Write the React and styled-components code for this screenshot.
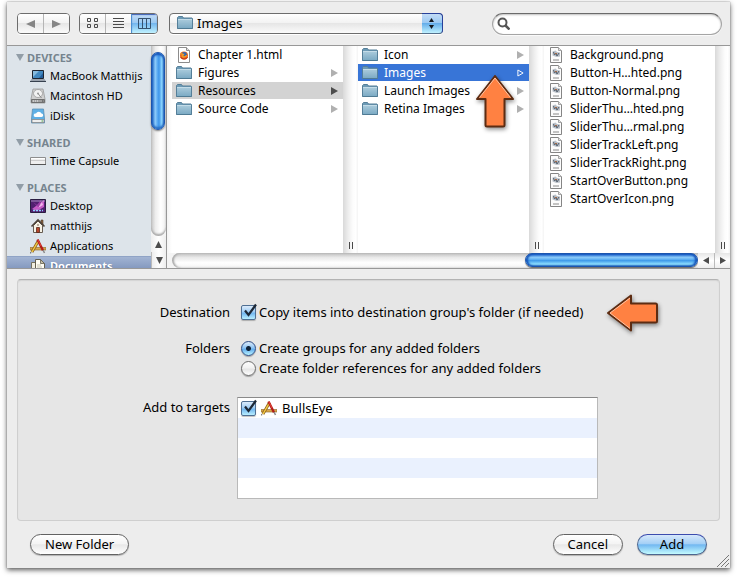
import React from "react";
import styled, { createGlobalStyle, css } from "styled-components";

const GlobalStyle = createGlobalStyle`
  * { box-sizing: border-box; }
  body {
    margin: 0;
    background: #fff;
    color: #000;
    font-family: "Lucida Grande", "Noto Sans", "Open Sans", sans-serif;
    font-size: 13px;
  }
  button, input, select { font: inherit; color: inherit; margin: 0; }
  ul { list-style: none; margin: 0; padding: 0; }
`;

const Page = styled.main`
  padding: 2px 7px 11px;
`;

const Dialog = styled.form`
  position: relative;
  background: #ededed;
  box-shadow: 0 0 1px #777, 0 2px 5px rgba(0, 0, 0, 0.65);
`;

/* Toolbar */

const Toolbar = styled.header`
  display: flex;
  align-items: center;
  height: 44px;
  padding: 0 8px 0 10px;
  border-bottom: 1px solid #989898;
`;

const Segments = styled.div`
  display: flex;
  height: 21px;
  margin-right: 9px;
  border: 1px solid #6d6d6d;
  border-radius: 4px;
  overflow: hidden;
  box-shadow: 0 1px 0 #fff;
`;

const Segment = styled.button`
  display: flex;
  align-items: center;
  justify-content: center;
  width: 26px;
  padding: 0;
  border: 0;
  border-left: 1px solid #b5b5b5;
  background: linear-gradient(#fff, #f3f3f3 45%, #e6e6e6 50%, #fbfbfb);
  &:first-child { width: 25px; border-left: 0; }
  ${(p) => p.$on && css`
    border-left-color: #4c8fd0;
    background: linear-gradient(#c3dcf6, #9ccaf3 45%, #74b6ee 50%, #c0f2ff);
    box-shadow: inset 0 1px 1px #3e5fb5;
  `}
`;

const PathPicker = styled.div`
  position: relative;
  flex: 0 1 274px;
  height: 21px;
  margin-left: 2px;
  svg { position: absolute; pointer-events: none; }
`;

const PathSelect = styled.select`
  appearance: none;
  width: 100%;
  height: 21px;
  padding: 0 24px 0 27px;
  border: 1px solid #6d6d6d;
  border-radius: 4px;
  background: linear-gradient(#fff, #f3f3f3 45%, #e6e6e6 50%, #fbfbfb);
  box-shadow: 0 1px 0 #fff;
  line-height: 19px;
`;

const PathFolder = styled.span`
  svg { top: 2px; left: 8px; }
`;

const PathCap = styled.span`
  position: absolute;
  top: 0;
  right: 0;
  width: 21px;
  height: 21px;
  border: 1px solid #28419a;
  border-bottom-color: #55708c;
  border-left: 0;
  border-radius: 0 4px 4px 0;
  background: linear-gradient(#c3dcf6, #9ccaf3 45%, #65aeea 50%, #c0f2ff);
  pointer-events: none;
  svg { top: 3px; left: 5px; }
`;

const Search = styled.label`
  display: flex;
  align-items: center;
  flex: 0 1 230px;
  height: 22px;
  margin-left: auto;
  padding-left: 4px;
  border: 1px solid #a5a5a5;
  border-top-color: #6b6b6b;
  border-radius: 11px;
  background: #fff;
  box-shadow: inset 0 1px 2px rgba(0, 0, 0, 0.25), 0 1px 0 #fafafa;
`;

const SearchInput = styled.input`
  flex: 1;
  min-width: 0;
  padding: 0 8px 0 4px;
  border: 0;
  outline: 0;
  background: transparent;
`;

/* File browser */

const Browser = styled.section`
  display: flex;
  height: 223px;
  border-bottom: 1px solid #989898;
  background: #fff;
`;

const Sidebar = styled.nav`
  flex: 0 0 144px;
  overflow: hidden;
  background: #dde4ea;
  font-size: 11px;
`;

const SideHeading = styled.h2`
  display: flex;
  align-items: center;
  gap: 3px;
  height: 25px;
  margin: 0;
  padding: 7px 0 0 9px;
  color: #76848f;
  font-size: 11px;
  font-weight: 700;
  &:first-child { height: 20px; padding-top: 2px; }
`;

const SideItem = styled.button`
  display: flex;
  align-items: center;
  gap: 4px;
  width: 100%;
  height: 20px;
  padding: 0 0 0 23px;
  border: 0;
  background: none;
  text-align: left;
  white-space: nowrap;
  ${(p) => p.$selected && css`
    border-top: 1px solid #8fa3c6;
    background: linear-gradient(#a2b4d3, #7087b2);
    color: #fff;
    font-weight: 700;
    text-shadow: 0 1px 1px #4b5d80;
  `}
`;

const SideName = styled.span`
  padding-bottom: 2px;
`;

const VScroll = styled.div`
  display: flex;
  flex-direction: column;
  flex: 0 0 16px;
  border-right: 1px solid #989898;
  background: #f4f4f4;
`;

const VTrack = styled.div`
  flex: 1;
  padding-top: 6px;
  border-radius: 0 0 8px 8px;
  background: linear-gradient(90deg, #c4c4c4, #ededed 30%, #fff 65%, #f0f0f0);
  box-shadow: inset 0 -2px 2px #aaa;
`;

const VThumb = styled.div`
  width: 14px;
  height: 78px;
  border: 1px solid #1c55ae;
  border-radius: 7px;
  background: linear-gradient(90deg, #256cc9, #8ccafa 28%, #5aabf3 45%, #3e95ea 58%, #8fd8ff 82%, #3a7fc9);
  box-shadow: 0 1px 2px #777, inset 0 2px 2px #1452b8, inset 0 -2px 2px #2a6fc4;
`;

const ScrollArrow = styled.button`
  display: flex;
  align-items: center;
  justify-content: center;
  flex: 0 0 16px;
  min-height: 0;
  padding: 0;
  border: 0;
  background: linear-gradient(90deg, #eee, #fff 50%, #eee);
  & + & { border-top: 1px solid #bbb; }
  ${(p) => p.$side && css`
    background: linear-gradient(#e6e6e6, #fff 50%, #eee);
    & + & { border-top: 0; border-left: 1px solid #bbb; }
  `}
`;

const Finder = styled.div`
  display: flex;
  flex-direction: column;
  flex: 1;
  min-width: 0;
`;

const Columns = styled.div`
  display: grid;
  grid-template-columns: repeat(3, minmax(0, 1fr));
  flex: 1;
  padding-left: 5px;
  background: linear-gradient(90deg, #f4f4f4, #fff 5px);
`;

const Column = styled.div`
  display: flex;
  position: relative;
  min-width: 0;
`;

const Files = styled.ul`
  flex: 1;
  min-width: 0;
  background: #fff;
`;

const File = styled.button`
  display: flex;
  align-items: center;
  gap: 6px;
  width: 100%;
  height: 17px;
  margin-bottom: 1px;
  padding: 0 5px 0 4px;
  border: 0;
  background: ${(p) => (p.$state === "active" ? "#3875d7" : p.$state === "path" ? "#d3d3d3" : "none")};
  color: ${(p) => (p.$state === "active" ? "#fff" : "#000")};
  font-size: 12px;
  line-height: 17px;
  text-align: left;
  white-space: nowrap;
  svg { flex: none; }
`;

const FileName = styled.span`
  flex: 1;
  min-width: 0;
`;

const Divider = styled.div`
  display: flex;
  align-items: flex-end;
  justify-content: center;
  flex: 0 0 15px;
  padding: 0 0 4px 1px;
  background: linear-gradient(90deg, #d9d9d9, #eee 35%, #fcfcfc 65%, #fff 85%, #f3f3f3);
`;

const Grip = styled.span`
  width: 4px;
  height: 7px;
  border: solid #4a4a4a;
  border-width: 0 1px;
`;

const HScroll = styled.div`
  display: flex;
  height: 15px;
  background: #f4f4f4;
`;

const HTrack = styled.div`
  display: flex;
  justify-content: flex-end;
  flex: 1;
  margin-left: 5px;
  border-radius: 8px 0 0 8px;
  background: linear-gradient(#bebebe, #e9e9e9 30%, #fff 65%, #f4f4f4);
  box-shadow: inset 2px 0 2px #aaa;
`;

const HThumb = styled.div`
  flex: 0 0 173px;
  height: 14px;
  border: 1px solid #1c55ae;
  border-radius: 7px;
  background: linear-gradient(#1761cc, #8ac9f8 28%, #6bb8f5 42%, #3f9bea 55%, #8fe0ff 85%, #4a9bd6);
  box-shadow: 0 1px 1px #666, inset 2px 0 2px #1452b8, inset -2px 0 2px #1452b8;
`;

/* Options */

const Options = styled.section`
  display: grid;
  grid-template-columns: auto minmax(0, 361px);
  column-gap: 7px;
  justify-content: center;
  align-items: start;
  margin: 10px 10px 0;
  padding: 22px 8px 21px 12px;
  border: 1px solid #cfcfcf;
  border-top-color: #b3b3b3;
  border-radius: 4px;
  background: #e6e6e6;
  box-shadow: inset 0 1px 1px #d4d4d4;
`;

const OptionLabel = styled.div`
  height: 20px;
  line-height: 20px;
  text-align: right;
`;

const OptionField = styled.div`
  position: relative;
  margin-bottom: ${(p) => p.$gap}px;
`;

const Choice = styled.label`
  display: flex;
  align-items: center;
  gap: 3px;
  width: max-content;
  height: 20px;
  padding-left: 4px;
  white-space: nowrap;
`;

const CheckWrap = styled.span`
  display: flex;
  position: relative;
  svg { position: absolute; left: 1px; top: -2px; pointer-events: none; }
  input:not(:checked) + svg { display: none; }
`;

const CheckInput = styled.input`
  appearance: none;
  width: 15px;
  height: 15px;
  border: 1px solid #4f6f93;
  border-radius: 2px;
  background: linear-gradient(#fff, #e4e4e4);
  box-shadow: 0 1px 1px rgba(0, 0, 0, 0.25);
  &:checked { background: linear-gradient(#dcebfb, #9fcdf5 45%, #72b6ef 55%, #b9efff); }
`;

const RadioInput = styled.input`
  appearance: none;
  width: 15px;
  height: 15px;
  border: 1px solid #6c6c6c;
  border-radius: 50%;
  background: linear-gradient(#fdfdfd, #f2f2f2 45%, #e5e5e5 55%, #fff);
  box-shadow: 0 1px 1px rgba(0, 0, 0, 0.3);
  &:checked {
    border-color: #2c4c86;
    background:
      radial-gradient(circle, #102238 0 2px, transparent 3px),
      linear-gradient(#dcebfb, #8fc4f3 45%, #63adee 55%, #baf3ff);
  }
`;

const Targets = styled.ul`
  border: 1px solid #b9b9b9;
  border-top-color: #8a8a8a;
  background: #fff;
`;

const TargetRow = styled.li`
  height: 20px;
  &:nth-child(even) { background: #eaf1fe; }
`;

const TargetLabel = styled(Choice)`
  gap: 5px;
  padding-left: 3px;
`;

/* Footer */

const Footer = styled.footer`
  display: flex;
  position: relative;
  gap: 14px;
  padding: 13px 23px;
`;

const PushButton = styled.button`
  min-width: 70px;
  height: 21px;
  padding: 0 14px;
  border: 1px solid #626262;
  border-radius: 11px;
  background: linear-gradient(#fff, #f4f4f4 45%, #e8e8e8 52%, #fff);
  box-shadow: 0 1px 1px rgba(0, 0, 0, 0.25);
  line-height: 19px;
  ${(p) => p.$left && css`margin-right: auto;`}
  ${(p) => p.$primary && css`
    border-color: #3c4cae #4c6690 #4c6690;
    background: linear-gradient(#d6e8fb, #a5d0f6 45%, #72b8f1 52%, #c4fbff);
  `}
`;

const ResizeGrip = styled.svg`
  position: absolute;
  right: 1px;
  bottom: 1px;
`;

const PointerUp = styled.svg`
  position: absolute;
  right: 28px;
  top: 28px;
  z-index: 1;
  filter: drop-shadow(1px 2px 2px rgba(0, 0, 0, 0.45));
  pointer-events: none;
`;

const PointerLeft = styled.svg`
  position: absolute;
  left: calc(100% + 8px);
  top: -9px;
  filter: drop-shadow(1px 2px 2px rgba(0, 0, 0, 0.45));
  pointer-events: none;
`;

/* Icons */

const Triangle = ({ dir, color = "#4d4d4d", w = 8, h = 8, outline }) => {
  const d = {
    left: "M8 0V8L0 4z",
    right: "M0 0V8L8 4z",
    up: "M0 8H8L4 0z",
    down: "M0 0H8L4 8z",
  }[dir];
  return (
    <svg width={w} height={h} viewBox="0 0 8 8" preserveAspectRatio="none" aria-hidden="true">
      <path d={outline ? "M1 1V7L7 4z" : d} fill={outline ? "none" : color} stroke={outline ? color : "none"} />
    </svg>
  );
};

const FolderIcon = () => (
  <svg width="16" height="16" viewBox="0 0 16 16" aria-hidden="true">
    <defs>
      <linearGradient id="folder" x2="0" y2="1">
        <stop stopColor="#a9cadb" />
        <stop offset="1" stopColor="#7aa9c3" />
      </linearGradient>
    </defs>
    <path d="M.5 13.5V2.500l1-1h4l1 1.500h8.500l.5.500v10z" fill="#6c9ab5" stroke="#557f99" />
    <path d="M1 4.500H15V13.500H1z" fill="url(#folder)" />
    <path d="M1 4.500H15" stroke="#c4dce8" />
    <path d="M.5 13.500H15.500" stroke="#4f7b94" />
  </svg>
);

const HtmlIcon = () => (
  <svg width="16" height="16" viewBox="0 0 16 16" aria-hidden="true">
    <path d="M2.500.5h8l3 3v12h-11z" fill="#fff" stroke="#8c8c8c" />
    <path d="M10.500.5v3h3" fill="#ddd" stroke="#8c8c8c" />
    <circle cx="8" cy="8.500" r="4" fill="#e9641b" />
    <circle cx="8.300" cy="7.300" r="2.400" fill="#3368ae" />
    <path d="M4.300 6.500c1 .2 1.500.8 3 1l-1 1.500c1 1.500 3 1 4.500-.5" fill="none" stroke="#f59b25" strokeWidth="1.500" />
    <path d="M4.500 10c1.500 2.500 5.500 2.800 7 .2" fill="none" stroke="#bf2f17" />
  </svg>
);

const PngIcon = () => (
  <svg width="16" height="16" viewBox="0 0 16 16" aria-hidden="true">
    <path d="M2.500.5h8l3 3v12h-11z" fill="#fcfcfc" stroke="#858585" />
    <path d="M10.500.5v3h3" fill="#e5e5e5" stroke="#a5a5a5" />
    <path d="M4.500 4.500l3-1 1.500 1.500 3 .5v4l-3.500.5-4-1.500z" fill="#b9c0c8" />
    <path d="M5.500 5l1 3L8 6.500l1 2.500 2-3" fill="none" stroke="#56606d" />
    <path d="M7 6.500h2" stroke="#a56b48" />
    <path d="M5 13h6" stroke="#8a8a8a" />
  </svg>
);

const LaptopIcon = () => (
  <svg width="16" height="16" viewBox="0 0 16 16" aria-hidden="true">
    <path d="M2.500 2.500h11v8h-11z" fill="#4288c0" stroke="#1d2430" />
    <path d="M3 3h6l-6 6z" fill="#86bbdf" />
    <path d="M9 10l4-5v5z" fill="#235d9a" />
    <path d="M1.500 11h13l1.300 2H.2z" fill="#9aa2ad" />
    <path d="M0 13.500h16" stroke="#37414f" />
  </svg>
);

const DriveIcon = () => (
  <svg width="16" height="16" viewBox="0 0 16 16" aria-hidden="true">
    <path d="M3 1h10l2 10v4H1v-4z" fill="#d0d0d0" stroke="#999" strokeWidth=".8" />
    <ellipse cx="8" cy="5.500" rx="4.500" ry="4" fill="#f2f2f2" stroke="#9a9a9a" strokeWidth=".8" />
    <circle cx="8" cy="5.500" r="1" fill="#999" />
    <path d="M8 5.500l3.500 4.500" stroke="#8a8a8a" />
    <path d="M1.500 11.500h13v3h-13z" fill="#a2a2a2" stroke="#707070" />
    <path d="M3 13h6" stroke="#eee" strokeDasharray="1 1" />
    <path d="M12 13h1.500" stroke="#444" />
  </svg>
);

const CloudDriveIcon = () => (
  <svg width="16" height="16" viewBox="0 0 16 16" aria-hidden="true">
    <path d="M2.500 1h11l1 10v4h-13v-4z" fill="#5fb0e6" stroke="#5d8fb2" strokeWidth=".8" />
    <path d="M2 11.500h12v3H2z" fill="#eee" stroke="#888" strokeWidth=".8" />
    <path d="M5 9h6.500a1.700 1.700 0 0 0 0-3.400A3 3 0 0 0 6 5.500 1.800 1.800 0 0 0 5 9z" fill="#fff" />
    <path d="M11.500 13h1.500" stroke="#45a445" />
  </svg>
);

const CapsuleIcon = () => (
  <svg width="16" height="16" viewBox="0 0 16 16" aria-hidden="true">
    <path d="M.5 4.500h15v7H.5z" fill="#efefef" stroke="#8e8e8e" />
    <path d="M1 7.500h14" stroke="#ccc" />
    <path d="M1 5.500h14" stroke="#fff" />
    <path d="M0 11.500h16" stroke="#555" />
  </svg>
);

const DesktopIcon = () => (
  <svg width="16" height="16" viewBox="0 0 16 16" aria-hidden="true">
    <path d="M.5 1.500h15v13H.5z" fill="#512070" stroke="#291d41" />
    <path d="M2 11L14 2v7l-7 4z" fill="#c55bc5" />
    <path d="M3 4l4 3 4-5-2 8z" fill="#9c3da8" />
    <path d="M8 10l4-6 1 3z" fill="#f0b7ea" />
    <path d="M1 3h14" stroke="#cbbbe0" strokeWidth=".7" />
    <path d="M3 12.500h10" stroke="#8fd0ff" strokeWidth="1.500" strokeDasharray="2 1" />
  </svg>
);

const HomeIcon = () => (
  <svg width="16" height="16" viewBox="0 0 16 16" aria-hidden="true">
    <path d="M11 2h2v5h-2z" fill="#91643f" stroke="#4b392a" strokeWidth=".6" />
    <path d="M3.500 7.500L8 3l4.500 4.500v7h-9z" fill="#f7f2e5" stroke="#665c51" />
    <path d="M1.500 8.500L8 2l6.500 6.500" fill="none" stroke="#4e443a" strokeWidth="1.600" />
    <path d="M6.500 9.500h3v5h-3z" fill="#b5452a" stroke="#5b281b" strokeWidth=".8" />
    <path d="M7 7h2" stroke="#7e6e5b" />
  </svg>
);

const AppsIcon = () => (
  <svg width="16" height="16" viewBox="0 0 16 16" aria-hidden="true">
    <path d="M0 9.500h16v2.500H0z" fill="#d8a74e" stroke="#8c6427" strokeWidth=".6" />
    <path d="M2 14L8.500 2.500" stroke="#8b5a18" strokeWidth="2.800" />
    <path d="M2 14L8 3.500" stroke="#f2cd45" strokeWidth="1.500" />
    <path d="M7.500 1.500l5.500 11" stroke="#b21d17" strokeWidth="2.400" />
    <path d="M8 2l3 6" stroke="#e6463c" />
    <path d="M13 12l1.500 3" stroke="#8a8a8a" strokeWidth="1.500" />
    <path d="M0 15.500l1.500-.5-.8-1.200z" fill="#333" />
  </svg>
);

const DocumentsIcon = () => (
  <svg width="16" height="16" viewBox="0 0 16 16" aria-hidden="true">
    <path d="M1.500 3.500h6l3 3v8h-9z" fill="#f1eee0" stroke="#74705f" />
    <path d="M5.500.5h5l4 4v9h-9z" fill="#fffdf3" stroke="#625f50" />
    <path d="M10.500.5v4h4z" fill="#c6c0a8" stroke="#625f50" strokeWidth=".8" />
    <path d="M7 6h4M7 8h5M7 10h5" stroke="#aaa692" strokeWidth=".7" />
  </svg>
);

const CheckMark = () => (
  <svg width="16" height="16" viewBox="0 0 16 16" aria-hidden="true">
    <path d="M3 7.500L6.500 12 14 1.500" fill="none" stroke="#1d2836" strokeWidth="2.200" />
  </svg>
);

const Check = (props) => (
  <CheckWrap>
    <CheckInput type="checkbox" defaultChecked {...props} />
    <CheckMark />
  </CheckWrap>
);

/* Data */

const places = [
  { title: "DEVICES", items: [["MacBook Matthijs", LaptopIcon], ["Macintosh HD", DriveIcon], ["iDisk", CloudDriveIcon]] },
  { title: "SHARED", items: [["Time Capsule", CapsuleIcon]] },
  { title: "PLACES", items: [["Desktop", DesktopIcon], ["matthijs", HomeIcon], ["Applications", AppsIcon], ["Documents", DocumentsIcon, true]] },
];

const folder = (name, state) => ({ name, state, Icon: FolderIcon, nested: true });
const png = (name) => ({ name, Icon: PngIcon });

const columns = [
  [{ name: "Chapter 1.html", Icon: HtmlIcon }, folder("Figures"), folder("Resources", "path"), folder("Source Code")],
  [folder("Icon"), folder("Images", "active"), folder("Launch Images"), folder("Retina Images")],
  [
    "Background.png", "Button-H…hted.png", "Button-Normal.png", "SliderThu…hted.png", "SliderThu…rmal.png",
    "SliderTrackLeft.png", "SliderTrackRight.png", "StartOverButton.png", "StartOverIcon.png",
  ].map(png),
];

const disclosure = { active: "#fff", path: "#4d4d4d" };

export default function App() {
  return (
    <Page>
      <GlobalStyle />
      <Dialog onSubmit={(e) => e.preventDefault()}>
        <Toolbar>
          <Segments>
            <Segment type="button" aria-label="Back"><Triangle dir="left" color="#858585" w={9} h={8} /></Segment>
            <Segment type="button" aria-label="Forward"><Triangle dir="right" color="#858585" w={9} h={8} /></Segment>
          </Segments>
          <Segments>
            <Segment type="button" aria-label="Icon view">
              <svg width="12" height="11" viewBox="0 0 12 11" fill="none" stroke="#4a4a4a">
                <path d="M.5.5h3v3h-3zM7.500.5h3v3h-3zM.5 6.500h3v3h-3zM7.500 6.500h3v3h-3z" />
              </svg>
            </Segment>
            <Segment type="button" aria-label="List view">
              <svg width="11" height="11" viewBox="0 0 11 11" stroke="#4a4a4a">
                <path d="M0 .5h11M0 3.500h11M0 6.500h11M0 9.500h11" />
              </svg>
            </Segment>
            <Segment type="button" aria-label="Column view" aria-pressed="true" $on>
              <svg width="13" height="11" viewBox="0 0 13 11" fill="none" stroke="#35516e">
                <path d="M.5.5h12v10H.5zM4.500.5v10M8.500.5v10" />
              </svg>
            </Segment>
          </Segments>
          <PathPicker>
            <PathSelect aria-label="Current folder" defaultValue="Images"><option>Images</option></PathSelect>
            <PathFolder><FolderIcon /></PathFolder>
            <PathCap>
              <svg width="9" height="13" viewBox="0 0 9 13"><path d="M2 5h5L4.500 1zM2 8h5l-2.500 4z" fill="#14181e" /></svg>
            </PathCap>
          </PathPicker>
          <Search>
            <svg width="13" height="13" viewBox="0 0 13 13" fill="none" stroke="#555" strokeWidth="2">
              <circle cx="5.500" cy="5.500" r="4" />
              <path d="M8.500 8.500l4 4" strokeWidth="2.500" />
            </svg>
            <SearchInput type="text" aria-label="Search" />
          </Search>
        </Toolbar>

        <Browser>
          <Sidebar>
            {places.map((group) => (
              <React.Fragment key={group.title}>
                <SideHeading>
                  <Triangle dir="down" color="#919da7" w={8} h={7} />
                  {group.title}
                </SideHeading>
                {group.items.map(([name, Icon, selected]) => (
                  <SideItem type="button" key={name} $selected={selected}>
                    <Icon />
                    <SideName>{name}</SideName>
                  </SideItem>
                ))}
              </React.Fragment>
            ))}
          </Sidebar>
          <VScroll>
            <VTrack><VThumb /></VTrack>
            <ScrollArrow type="button" aria-label="Scroll up"><Triangle dir="up" w={7} h={7} /></ScrollArrow>
            <ScrollArrow type="button" aria-label="Scroll down"><Triangle dir="down" w={7} h={7} /></ScrollArrow>
          </VScroll>
          <Finder>
            <Columns>
              {columns.map((files, i) => (
                <Column key={i}>
                  <Files>
                    {files.map(({ name, state, Icon, nested }) => (
                      <li key={name}>
                        <File type="button" $state={state}>
                          <Icon />
                          <FileName>{name}</FileName>
                          {nested && <Triangle dir="right" color={disclosure[state] || "#b0b0b0"} outline={state === "active"} w={7} />}
                        </File>
                      </li>
                    ))}
                  </Files>
                  <Divider><Grip /></Divider>
                  {i === 1 && (
                    <PointerUp width="42" height="56" viewBox="0 0 42 56">
                      <path d="M21 2L39 25H30.500V51Q30.500 52.500 29 52.500H13Q11.500 52.500 11.500 51V25H3z" fill="#ff8142" stroke="#5d2c12" strokeWidth="2" strokeLinejoin="round" />
                      <path d="M5.500 23.500L21 4L36.500 23.500" fill="none" stroke="#ffc3a2" />
                    </PointerUp>
                  )}
                </Column>
              ))}
            </Columns>
            <HScroll>
              <HTrack><HThumb /></HTrack>
              <ScrollArrow type="button" $side aria-label="Scroll left"><Triangle dir="left" w={6} h={7} /></ScrollArrow>
              <ScrollArrow type="button" $side aria-label="Scroll right"><Triangle dir="right" w={6} h={7} /></ScrollArrow>
            </HScroll>
          </Finder>
        </Browser>

        <Options>
          <OptionLabel>Destination</OptionLabel>
          <OptionField $gap={16}>
            <Choice>
              <Check />
              Copy items into destination group's folder (if needed)
            </Choice>
            <PointerLeft width="54" height="40" viewBox="0 0 54 40">
              <path d="M2 20L25 2.500V10.500H49.500Q51 10.500 51 12V28Q51 29.500 49.500 29.500H25V37.500z" fill="#ff8142" stroke="#5d2c12" strokeWidth="2" strokeLinejoin="round" />
              <path d="M24 5L4 20L24 35.500" fill="none" stroke="#ffc3a2" />
            </PointerLeft>
          </OptionField>

          <OptionLabel>Folders</OptionLabel>
          <OptionField $gap={19}>
            <Choice><RadioInput type="radio" name="folders" defaultChecked />Create groups for any added folders</Choice>
            <Choice><RadioInput type="radio" name="folders" />Create folder references for any added folders</Choice>
          </OptionField>

          <OptionLabel>Add to targets</OptionLabel>
          <Targets>
            <TargetRow><TargetLabel><Check /><AppsIcon />BullsEye</TargetLabel></TargetRow>
            <TargetRow />
            <TargetRow />
            <TargetRow />
            <TargetRow />
          </Targets>
        </Options>

        <Footer>
          <PushButton type="button" $left>New Folder</PushButton>
          <PushButton type="button">Cancel</PushButton>
          <PushButton type="submit" $primary>Add</PushButton>
          <ResizeGrip width="12" height="12" viewBox="0 0 12 12">
            <path d="M0 12L12 0M4 12L12 4M8 12L12 8" stroke="#777" />
          </ResizeGrip>
        </Footer>
      </Dialog>
    </Page>
  );
}
